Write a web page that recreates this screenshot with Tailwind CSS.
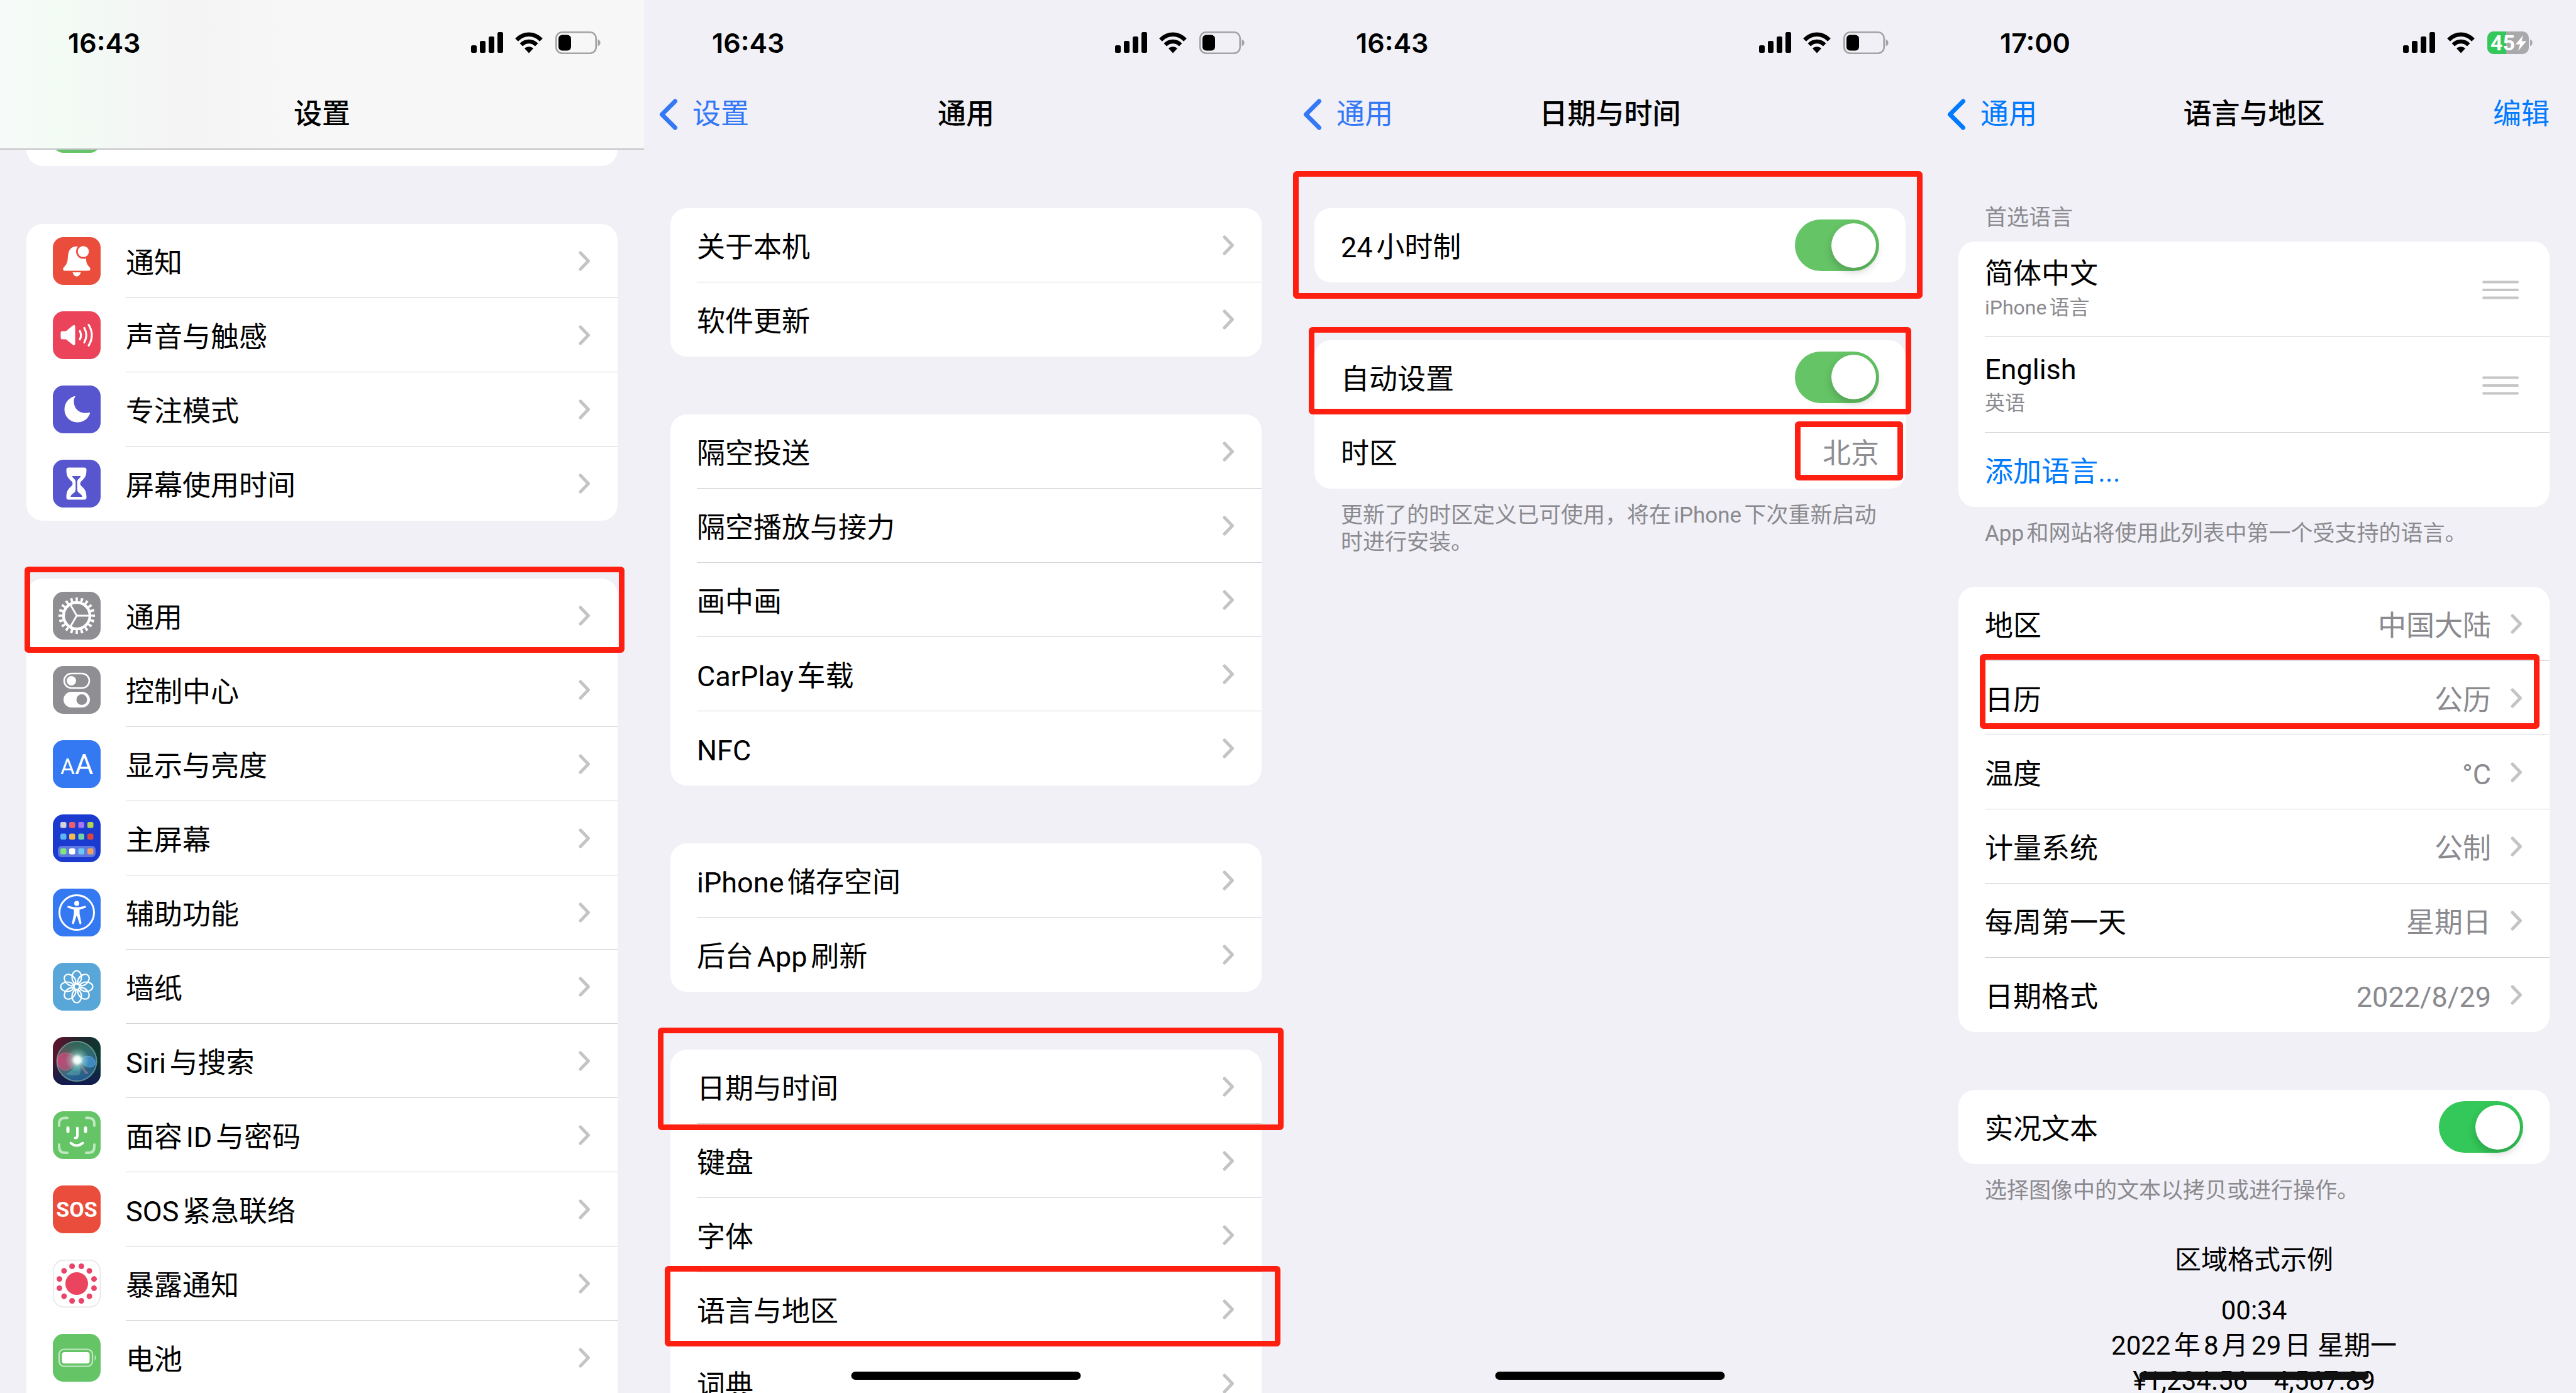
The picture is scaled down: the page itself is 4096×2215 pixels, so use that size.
<!DOCTYPE html>
<html lang="zh-CN">
<head>
<meta charset="utf-8">
<meta name="viewport" content="width=device-width, initial-scale=1">
<title>设置</title>
<script src="https://cdn.jsdelivr.net/npm/@tailwindcss/browser@4"></script>
</head>
<body class="bg-[#f1f0f6] font-['Roboto','Noto_Sans_CJK_SC',sans-serif] text-[45px] leading-[56px] text-black [text-autospace:normal]">

<!-- Shared symbols -->
<svg class="hidden" aria-hidden="true">
  <symbol id="chev" viewBox="0 0 20 34"><path d="M3 4 15.500 17 3 30" fill="none" stroke="#c4c4c7" stroke-width="5" stroke-linecap="round" stroke-linejoin="round"/></symbol>
  <symbol id="back" viewBox="0 0 32 52"><path d="M26.500 5 5.500 26 26.500 47" fill="none" stroke="currentColor" stroke-width="7" stroke-linecap="round" stroke-linejoin="round"/></symbol>
  <symbol id="bars" viewBox="0 0 51 34"><rect x="0" y="21" width="9" height="12" rx="2.500"/><rect x="14" y="14" width="9" height="19" rx="2.500"/><rect x="28" y="7" width="9" height="26" rx="2.500"/><rect x="42" y="0" width="9" height="33" rx="2.500"/></symbol>
  <symbol id="wifi" viewBox="0 0 44 34"><g fill="none" stroke="currentColor" stroke-width="6.500"><path d="M2.500 12.500C13.500 .800 30.500 .800 41.500 12.500"/><path d="M9.800 20.300C16.800 13.200 27.200 13.200 34.200 20.300"/></g><path d="M22 33.500 15 26C19 22.300 25 22.300 29 26Z"/></symbol>
  <symbol id="batt" viewBox="0 0 72 36"><rect x="1.300" y="1.300" width="63.400" height="33.400" rx="9.500" fill="none" stroke="#a3a3a6" stroke-width="2.600"/><rect x="5" y="5.500" width="20" height="25" rx="6"/><path d="M67.500 12.500C73 14.500 73 21.500 67.500 23.500Z" fill="#a3a3a6"/></symbol>
  <symbol id="grip" viewBox="0 0 58 32"><path d="M2 3.500H56M2 16H56M2 28.500H56" stroke="#c6c6c8" stroke-width="4" stroke-linecap="round"/></symbol>
</svg>

<main class="grid grid-cols-4 h-screen overflow-hidden">

<!-- Settings root -->
<section class="relative overflow-hidden">
  <header class="h-[238px] border-b-2 border-[#c3c3c8] bg-[linear-gradient(90deg,#f7faf9_0%,#f2fbf4_10%,#f4f7f5_20%,#f4f4f4_28%,#f7f7f7_45%)]">
    <div class="flex h-[136px] items-center pl-[108px] pr-[69px]">
      <time class="mr-auto font-['Inter'] text-[43px] font-semibold">16:43</time>
      <svg class="h-[34px] w-[51px]"><use href="#bars"/></svg><svg class="ml-[19px] h-[34px] w-[44px]"><use href="#wifi"/></svg><svg class="ml-[20px] h-[36px] w-[72px]"><use href="#batt"/></svg>
    </div>
    <h1 class="pt-[18px] text-center font-medium">设置</h1>
  </header>
  <div class="mx-[42px] flex h-[26px] items-end overflow-hidden rounded-b-[26px] bg-white pb-[21px] pl-[42px]"><span class="size-[76px] shrink-0 rounded-[17px] bg-[#65c466]"></span></div>

  <ul class="mx-[42px] mt-[92px] rounded-[26px] bg-white">
    <li><a href="#" class="flex h-[118px] items-center pl-[42px]">
      <svg class="size-[76px]" viewBox="0 0 76 76"><rect width="76" height="76" rx="17" fill="#eb4d3d"/><path fill="#fff" d="M37 15C28 15 24.500 22 24 31C23.500 41 21.500 44 17.500 48C15 51 16.500 53.500 19 53.500H57C59.500 53.500 60.500 50.500 58.500 48C54.500 44 53 41 52.500 32L45 15.500Q41 15 37 15ZM31.500 56H44.500C43.500 60 41 62.500 38 62.500S32.500 60 31.500 56Z"/><circle cx="48.500" cy="23" r="11.500" fill="#eb4d3d"/><circle cx="48.500" cy="23" r="8.800" fill="#fff"/></svg>
      <span class="ml-[40px] flex h-full flex-1 items-center justify-between border-b border-[#d3d3d6] pr-[42px]"><span class="pt-2">通知</span><svg class="h-[34px] w-[20px]"><use href="#chev"/></svg></span></a></li>
    <li><a href="#" class="flex h-[118px] items-center pl-[42px]">
      <svg class="size-[76px]" viewBox="0 0 76 76"><rect width="76" height="76" rx="17" fill="#eb445a"/><path fill="#fff" d="M15 31.500H21L32 22.500Q35.500 20.500 35.500 24.500V51.500Q35.500 55.500 32 53.500L21 44.500H15Q12.500 44.500 12.500 42V34Q12.500 31.500 15 31.500Z"/><path d="M43 31.500Q46.500 38 43 44.500M50 26.500Q56.500 38 50 49.500M57 21.500Q67 38 57 54.500" fill="none" stroke="#fff" stroke-width="3.200" stroke-linecap="round"/></svg>
      <span class="ml-[40px] flex h-full flex-1 items-center justify-between border-b border-[#d3d3d6] pr-[42px]"><span class="pt-2">声音与触感</span><svg class="h-[34px] w-[20px]"><use href="#chev"/></svg></span></a></li>
    <li><a href="#" class="flex h-[118px] items-center pl-[42px]">
      <svg class="size-[76px]" viewBox="0 0 76 76"><rect width="76" height="76" rx="17" fill="#5856ce"/><path fill="#fff" d="M34.500 17C24.500 20 18.500 28.500 18.500 38C18.500 50 28 58.500 39.500 58.500C48.500 58.500 56 53 59 44.500Q59.500 42.500 57.500 43C43 46.500 32.500 37 33.500 23Q33.700 20 35.500 18Q36 16.500 34.500 17Z"/></svg>
      <span class="ml-[40px] flex h-full flex-1 items-center justify-between border-b border-[#d3d3d6] pr-[42px]"><span class="pt-2">专注模式</span><svg class="h-[34px] w-[20px]"><use href="#chev"/></svg></span></a></li>
    <li><a href="#" class="flex h-[118px] items-center pl-[42px]">
      <svg class="size-[76px]" viewBox="0 0 76 76"><rect width="76" height="76" rx="17" fill="#5856ce"/><path fill="#fff" d="M25 12.500H50Q53.500 12.500 53.500 16C53.500 27 50 30 45 34.500Q42 38 45 41.500C50 46 53.500 49 53.500 60Q53.500 63.500 50 63.500H25Q21.500 63.500 21.500 60C21.500 49 25 46 30 41.500Q33 38 30 34.500C25 30 21.500 27 21.500 16Q21.500 12.500 25 12.500Z"/><path fill="#5856ce" d="M30.500 26H44.500Q43 29 40.500 31Q38.800 32.500 38.800 35V48Q39 51 42 53Q46 55.500 47 59H28Q29 55.500 33 53Q36.200 51 36.200 48V35Q36.200 32.500 34.500 31Q32 29 30.500 26Z"/></svg>
      <span class="ml-[40px] flex h-full flex-1 items-center justify-between pr-[42px]"><span class="pt-2">屏幕使用时间</span><svg class="h-[34px] w-[20px]"><use href="#chev"/></svg></span></a></li>
  </ul>

  <ul class="mx-[42px] mt-[92px] rounded-t-[26px] bg-white pb-8">
    <li class="relative"><a href="#" class="flex h-[118px] items-center pl-[42px]">
      <svg class="size-[76px]" viewBox="0 0 76 76"><rect width="76" height="76" rx="17" fill="#8e8e93"/><g fill="none" stroke="#fff"><circle cx="38" cy="38" r="21" stroke-width="4.500"/><circle cx="38" cy="38" r="26" stroke-width="6" pathLength="40" stroke-dasharray="0.900 1.100" stroke-dashoffset="0.450"/><path d="M38 38H58M38 38 28 20.700M38 38 28 55.300" stroke-width="2.800"/></g></svg>
      <span class="ml-[40px] flex h-full flex-1 items-center justify-between border-b border-[#d3d3d6] pr-[42px]"><span class="pt-2">通用</span><svg class="h-[34px] w-[20px]"><use href="#chev"/></svg></span></a>
      <span class="pointer-events-none absolute -top-[19px] -right-[11px] bottom-0 -left-[3px] rounded-md border-[9px] border-[#ff1f11]"></span></li>
    <li><a href="#" class="flex h-[118px] items-center pl-[42px]">
      <svg class="size-[76px]" viewBox="0 0 76 76"><rect width="76" height="76" rx="17" fill="#8e8e93"/><rect x="18" y="12" width="40" height="23" rx="11.500" fill="none" stroke="#fff" stroke-width="2.600"/><circle cx="29.500" cy="23.500" r="7.500" fill="#fff"/><rect x="17" y="41" width="42" height="25" rx="12.500" fill="#fff"/><circle cx="46" cy="53.500" r="8.500" fill="#8e8e93"/></svg>
      <span class="ml-[40px] flex h-full flex-1 items-center justify-between border-b border-[#d3d3d6] pr-[42px]"><span class="pt-2">控制中心</span><svg class="h-[34px] w-[20px]"><use href="#chev"/></svg></span></a></li>
    <li><a href="#" class="flex h-[118px] items-center pl-[42px]">
      <svg class="size-[76px]" viewBox="0 0 76 76"><rect width="76" height="76" rx="17" fill="#3478f2"/><text x="12" y="54" fill="#fff" font-size="35">A</text><text x="35" y="54" fill="#fff" font-size="45">A</text></svg>
      <span class="ml-[40px] flex h-full flex-1 items-center justify-between border-b border-[#d3d3d6] pr-[42px]"><span class="pt-2">显示与亮度</span><svg class="h-[34px] w-[20px]"><use href="#chev"/></svg></span></a></li>
    <li><a href="#" class="flex h-[118px] items-center pl-[42px]">
      <svg class="size-[76px]" viewBox="0 0 76 76"><rect width="76" height="76" rx="17" fill="#1b3bd0"/><rect x="8" y="50" width="60" height="18" rx="6" fill="#6079e0"/>
        <rect x="12" y="12" width="9.500" height="9.500" rx="2.500" fill="#d3d3d8"/><rect x="26" y="12" width="9.500" height="9.500" rx="2.500" fill="#ec5f67"/><rect x="40.500" y="12" width="9.500" height="9.500" rx="2.500" fill="#a974f5"/><rect x="55" y="12" width="9.500" height="9.500" rx="2.500" fill="#b5d34f"/>
        <rect x="12" y="30.500" width="9.500" height="9.500" rx="2.500" fill="#5ab5f2"/><rect x="26" y="30.500" width="9.500" height="9.500" rx="2.500" fill="#f3bd4a"/><rect x="40.500" y="30.500" width="9.500" height="9.500" rx="2.500" fill="#6fd3a4"/><rect x="55" y="30.500" width="9.500" height="9.500" rx="2.500" fill="#e0453d"/>
        <rect x="12" y="54" width="9.500" height="9.500" rx="2.500" fill="#81e37e"/><rect x="26" y="54" width="9.500" height="9.500" rx="2.500" fill="#fff"/><rect x="40.500" y="54" width="9.500" height="9.500" rx="2.500" fill="#6ac9f7"/><rect x="55" y="54" width="9.500" height="9.500" rx="2.500" fill="#f1a15f"/></svg>
      <span class="ml-[40px] flex h-full flex-1 items-center justify-between border-b border-[#d3d3d6] pr-[42px]"><span class="pt-2">主屏幕</span><svg class="h-[34px] w-[20px]"><use href="#chev"/></svg></span></a></li>
    <li><a href="#" class="flex h-[118px] items-center pl-[42px]">
      <svg class="size-[76px]" viewBox="0 0 76 76"><rect width="76" height="76" rx="17" fill="#3478f2"/><circle cx="38" cy="38" r="27.500" fill="none" stroke="#fff" stroke-width="3"/><circle cx="38" cy="23.500" r="4" fill="#fff"/><path fill="#fff" d="M24.500 27.500 34 29.500H42L51.500 27.500Q54 28.500 52 30.500L42.500 33.500V40L45.500 54.500Q45 57.500 42.500 56L38.500 43.500H37.500L33.500 56Q31 57.500 30.500 54.500L33.500 40V33.500L24 30.500Q22 28.500 24.500 27.500Z"/></svg>
      <span class="ml-[40px] flex h-full flex-1 items-center justify-between border-b border-[#d3d3d6] pr-[42px]"><span class="pt-2">辅助功能</span><svg class="h-[34px] w-[20px]"><use href="#chev"/></svg></span></a></li>
    <li><a href="#" class="flex h-[118px] items-center pl-[42px]">
      <svg class="size-[76px]" viewBox="0 0 76 76"><rect width="76" height="76" rx="17" fill="#59a6d9"/><g fill="none" stroke="#fff" stroke-width="2.200"><ellipse id="petal" cx="38" cy="23" rx="7.500" ry="10.500"/><use href="#petal" transform="rotate(45 38 38)"/><use href="#petal" transform="rotate(90 38 38)"/><use href="#petal" transform="rotate(135 38 38)"/><use href="#petal" transform="rotate(180 38 38)"/><use href="#petal" transform="rotate(225 38 38)"/><use href="#petal" transform="rotate(270 38 38)"/><use href="#petal" transform="rotate(315 38 38)"/><circle cx="38" cy="38" r="4.500"/></g></svg>
      <span class="ml-[40px] flex h-full flex-1 items-center justify-between border-b border-[#d3d3d6] pr-[42px]"><span class="pt-2">墙纸</span><svg class="h-[34px] w-[20px]"><use href="#chev"/></svg></span></a></li>
    <li><a href="#" class="flex h-[118px] items-center pl-[42px]">
      <svg class="size-[76px]" viewBox="0 0 76 76"><defs>
        <linearGradient id="siriBg" x1="0" y1="0" x2="1" y2=".3"><stop offset="0" stop-color="#6b0f2e"/><stop offset=".5" stop-color="#22262c"/><stop offset="1" stop-color="#0c3a33"/></linearGradient>
        <linearGradient id="siriLow" x1="0" y1="0" x2="0" y2="1"><stop offset=".45" stop-color="#101a4a" stop-opacity="0"/><stop offset="1" stop-color="#121a50"/></linearGradient>
        <linearGradient id="siriOrb" x1="0" y1=".3" x2="1" y2=".7"><stop offset="0" stop-color="#b0395f"/><stop offset=".45" stop-color="#4f7f7c"/><stop offset="1" stop-color="#20578f"/></linearGradient>
        <linearGradient id="siriFade" x1="0" y1="0" x2="0" y2="1"><stop offset="0" stop-color="#24604f" stop-opacity=".9"/><stop offset=".5" stop-color="#1f6b55" stop-opacity="0"/><stop offset="1" stop-color="#1f55a0" stop-opacity=".9"/></linearGradient>
        <radialGradient id="siriGlow"><stop offset="0" stop-color="#fff"/><stop offset=".28" stop-color="#effffa" stop-opacity=".95"/><stop offset=".55" stop-color="#b5e8da" stop-opacity=".4"/><stop offset="1" stop-color="#9fe3d2" stop-opacity="0"/></radialGradient></defs>
        <rect width="76" height="76" rx="17" fill="url(#siriBg)"/><rect width="76" height="76" rx="17" fill="url(#siriLow)"/><circle cx="38" cy="38.500" r="31.500" fill="url(#siriOrb)"/><circle cx="38" cy="38.500" r="31.500" fill="url(#siriFade)" stroke="#7fae9f" stroke-opacity=".7" stroke-width="2"/><path d="M7 38Q9 25 22 25Q31 26 39 37Q31 52 20 53Q9 52 7 38Z" fill="#e0457f" fill-opacity=".55" stroke="#f08aae" stroke-opacity=".5"/><path d="M41 37Q51 28 60 31Q69 36 67 44Q62 50 54 47Q46 43 41 37Z" fill="#4aa3e8" fill-opacity=".6" stroke="#8cc8f5" stroke-opacity=".5"/><path d="M40 39 57 58 52 59Z" fill="#d87ab5" fill-opacity=".5"/><path d="M38 40Q32 54 20 59Q30 62 42 60Q48 50 38 40Z" fill="#6fc6d8" fill-opacity=".35"/><circle cx="39" cy="36.500" r="19" fill="url(#siriGlow)"/></svg>
      <span class="ml-[40px] flex h-full flex-1 items-center justify-between border-b border-[#d3d3d6] pr-[42px]"><span class="pt-2">Siri与搜索</span><svg class="h-[34px] w-[20px]"><use href="#chev"/></svg></span></a></li>
    <li><a href="#" class="flex h-[118px] items-center pl-[42px]">
      <svg class="size-[76px]" viewBox="0 0 76 76"><rect width="76" height="76" rx="17" fill="#65c466"/><path d="M10 23V20Q10 10.500 19.500 10.500H23M53 10.500H56.500Q66 10.500 66 20V23M66 53V56.500Q66 66 56.500 66H53M23 66H19.500Q10 66 10 56.500V53" fill="none" stroke="#bfe7c0" stroke-width="4" stroke-linecap="round"/><path d="M24 26.500V32M52 26.500V32" stroke="#fff" stroke-width="5" stroke-linecap="round"/><path d="M39 26.500V39Q39 42.500 35.500 42.500M28.500 50.500Q38 58.500 47.500 50.500" fill="none" stroke="#fff" stroke-width="4" stroke-linecap="round"/></svg>
      <span class="ml-[40px] flex h-full flex-1 items-center justify-between border-b border-[#d3d3d6] pr-[42px]"><span class="pt-2">面容ID与密码</span><svg class="h-[34px] w-[20px]"><use href="#chev"/></svg></span></a></li>
    <li><a href="#" class="flex h-[118px] items-center pl-[42px]">
      <svg class="size-[76px]" viewBox="0 0 76 76"><rect width="76" height="76" rx="17" fill="#eb4d3d"/><text x="38" y="50" text-anchor="middle" fill="#fff" font-size="34" font-weight="700">SOS</text></svg>
      <span class="ml-[40px] flex h-full flex-1 items-center justify-between border-b border-[#d3d3d6] pr-[42px]"><span class="pt-2">SOS紧急联络</span><svg class="h-[34px] w-[20px]"><use href="#chev"/></svg></span></a></li>
    <li><a href="#" class="flex h-[118px] items-center pl-[42px]">
      <svg class="size-[76px]" viewBox="0 0 76 76"><rect x=".700" y=".700" width="74.600" height="74.600" rx="17" fill="#fff" stroke="#e3e3e6" stroke-width="1.400"/><g fill="#e9446a"><circle cx="38" cy="38" r="18" fill="#eb445f"/><g id="pair"><circle cx="45.400" cy="10.500" r="4.500"/><circle cx="30.600" cy="10.500" r="4.500"/></g><use href="#pair" transform="rotate(60 38 38)"/><use href="#pair" transform="rotate(120 38 38)"/><use href="#pair" transform="rotate(180 38 38)"/><use href="#pair" transform="rotate(240 38 38)"/><use href="#pair" transform="rotate(300 38 38)"/></g></svg>
      <span class="ml-[40px] flex h-full flex-1 items-center justify-between border-b border-[#d3d3d6] pr-[42px]"><span class="pt-2">暴露通知</span><svg class="h-[34px] w-[20px]"><use href="#chev"/></svg></span></a></li>
    <li><a href="#" class="flex h-[118px] items-center pl-[42px]">
      <svg class="size-[76px]" viewBox="0 0 76 76"><rect width="76" height="76" rx="17" fill="#65c466"/><rect x="10" y="24.500" width="53" height="27" rx="8" fill="none" stroke="#c4e9c5" stroke-width="2.200"/><rect x="14.500" y="29" width="44" height="18" rx="4" fill="#fff"/><path d="M66.500 33Q70.500 38 66.500 43Z" fill="#c4e9c5"/></svg>
      <span class="ml-[40px] flex h-full flex-1 items-center justify-between pr-[42px]"><span class="pt-2">电池</span><svg class="h-[34px] w-[20px]"><use href="#chev"/></svg></span></a></li>
  </ul>
</section>

<!-- General -->
<section class="relative overflow-hidden">
  <header class="h-[238px]">
    <div class="flex h-[136px] items-center pl-[108px] pr-[69px]">
      <time class="mr-auto font-['Inter'] text-[43px] font-semibold">16:43</time>
      <svg class="h-[34px] w-[51px]"><use href="#bars"/></svg><svg class="ml-[19px] h-[34px] w-[44px]"><use href="#wifi"/></svg><svg class="ml-[20px] h-[36px] w-[72px]"><use href="#batt"/></svg>
    </div>
    <div class="grid grid-cols-[1fr_auto_1fr] items-center px-[42px] pt-[18px]">
      <a href="#" class="-ml-[19px] flex items-center gap-[22px] text-[#3478f6]"><svg class="h-[52px] w-[32px]"><use href="#back"/></svg>设置</a>
      <h1 class="font-medium">通用</h1>
    </div>
  </header>
  <ul class="mx-[42px] mt-[93px] rounded-[26px] bg-white pl-[42px]">
    <li><a href="#" class="flex h-[118px] items-center justify-between border-b border-[#d3d3d6] pr-[42px]"><span class="pt-2">关于本机</span><svg class="h-[34px] w-[20px]"><use href="#chev"/></svg></a></li>
    <li><a href="#" class="flex h-[118px] items-center justify-between pr-[42px]"><span class="pt-2">软件更新</span><svg class="h-[34px] w-[20px]"><use href="#chev"/></svg></a></li>
  </ul>
  <ul class="mx-[42px] mt-[92px] rounded-[26px] bg-white pl-[42px]">
    <li><a href="#" class="flex h-[118px] items-center justify-between border-b border-[#d3d3d6] pr-[42px]"><span class="pt-2">隔空投送</span><svg class="h-[34px] w-[20px]"><use href="#chev"/></svg></a></li>
    <li><a href="#" class="flex h-[118px] items-center justify-between border-b border-[#d3d3d6] pr-[42px]"><span class="pt-2">隔空播放与接力</span><svg class="h-[34px] w-[20px]"><use href="#chev"/></svg></a></li>
    <li><a href="#" class="flex h-[118px] items-center justify-between border-b border-[#d3d3d6] pr-[42px]"><span class="pt-2">画中画</span><svg class="h-[34px] w-[20px]"><use href="#chev"/></svg></a></li>
    <li><a href="#" class="flex h-[118px] items-center justify-between border-b border-[#d3d3d6] pr-[42px]"><span class="pt-2">CarPlay车载</span><svg class="h-[34px] w-[20px]"><use href="#chev"/></svg></a></li>
    <li><a href="#" class="flex h-[118px] items-center justify-between pr-[42px]"><span class="pt-2">NFC</span><svg class="h-[34px] w-[20px]"><use href="#chev"/></svg></a></li>
  </ul>
  <ul class="mx-[42px] mt-[92px] rounded-[26px] bg-white pl-[42px]">
    <li><a href="#" class="flex h-[118px] items-center justify-between border-b border-[#d3d3d6] pr-[42px]"><span class="pt-2">iPhone储存空间</span><svg class="h-[34px] w-[20px]"><use href="#chev"/></svg></a></li>
    <li><a href="#" class="flex h-[118px] items-center justify-between pr-[42px]"><span class="pt-2">后台App刷新</span><svg class="h-[34px] w-[20px]"><use href="#chev"/></svg></a></li>
  </ul>
  <ul class="mx-[42px] mt-[92px] rounded-[26px] bg-white">
    <li class="relative pl-[42px]"><a href="#" class="flex h-[118px] items-center justify-between border-b border-[#d3d3d6] pr-[42px]"><span class="pt-2">日期与时间</span><svg class="h-[34px] w-[20px]"><use href="#chev"/></svg></a>
      <span class="pointer-events-none absolute -top-[35px] -right-[35px] -bottom-[10px] -left-[20px] rounded-md border-[9px] border-[#ff1f11]"></span></li>
    <li class="pl-[42px]"><a href="#" class="flex h-[118px] items-center justify-between border-b border-[#d3d3d6] pr-[42px]"><span class="pt-2">键盘</span><svg class="h-[34px] w-[20px]"><use href="#chev"/></svg></a></li>
    <li class="pl-[42px]"><a href="#" class="flex h-[118px] items-center justify-between border-b border-[#d3d3d6] pr-[42px]"><span class="pt-2">字体</span><svg class="h-[34px] w-[20px]"><use href="#chev"/></svg></a></li>
    <li class="relative pl-[42px]"><a href="#" class="flex h-[118px] items-center justify-between border-b border-[#d3d3d6] pr-[42px]"><span class="pt-2">语言与地区</span><svg class="h-[34px] w-[20px]"><use href="#chev"/></svg></a>
      <span class="pointer-events-none absolute -top-[10px] -right-[30px] bottom-0 -left-[9px] rounded-md border-[9px] border-[#ff1f11]"></span></li>
    <li class="pl-[42px]"><a href="#" class="flex h-[118px] items-center justify-between pr-[42px]"><span class="pt-2">词典</span><svg class="h-[34px] w-[20px]"><use href="#chev"/></svg></a></li>
  </ul>
  <div class="absolute bottom-[21px] left-1/2 h-[13px] w-[365px] -translate-x-1/2 rounded-full bg-black"></div>
</section>

<!-- Date & time -->
<section class="relative overflow-hidden">
  <header class="h-[238px]">
    <div class="flex h-[136px] items-center pl-[108px] pr-[69px]">
      <time class="mr-auto font-['Inter'] text-[43px] font-semibold">16:43</time>
      <svg class="h-[34px] w-[51px]"><use href="#bars"/></svg><svg class="ml-[19px] h-[34px] w-[44px]"><use href="#wifi"/></svg><svg class="ml-[20px] h-[36px] w-[72px]"><use href="#batt"/></svg>
    </div>
    <div class="grid grid-cols-[1fr_auto_1fr] items-center px-[42px] pt-[18px]">
      <a href="#" class="-ml-[19px] flex items-center gap-[22px] text-[#3478f6]"><svg class="h-[52px] w-[32px]"><use href="#back"/></svg>通用</a>
      <h1 class="font-medium">日期与时间</h1>
    </div>
  </header>
  <div class="relative mx-[42px] mt-[93px] flex h-[118px] items-center justify-between rounded-[26px] bg-white px-[42px]">
    <label for="h24" class="pt-2">24小时制</label>
    <input id="h24" type="checkbox" role="switch" checked class="flex h-[82px] w-[134px] appearance-none items-center justify-end rounded-full bg-[#65c466] pr-[5px] before:size-[71px] before:rounded-full before:bg-white before:shadow-[0_6px_14px_rgba(0,0,0,0.2)] before:content-['']">
    <span class="pointer-events-none absolute -top-[59px] -right-[27px] -bottom-[26px] -left-[34px] rounded-md border-[9px] border-[#ff1f11]"></span>
  </div>
  <div class="mx-[42px] mt-[92px] rounded-[26px] bg-white">
    <div class="relative pl-[42px]">
      <div class="flex h-[118px] items-center justify-between border-b border-[#d3d3d6] pr-[42px]"><label for="auto" class="pt-2">自动设置</label>
      <input id="auto" type="checkbox" role="switch" checked class="flex h-[82px] w-[134px] appearance-none items-center justify-end rounded-full bg-[#65c466] pr-[5px] before:size-[71px] before:rounded-full before:bg-white before:shadow-[0_6px_14px_rgba(0,0,0,0.2)] before:content-['']"></div>
      <span class="pointer-events-none absolute -top-[21px] -right-[9px] bottom-0 -left-[9px] rounded-md border-[9px] border-[#ff1f11]"></span>
    </div>
    <div class="relative flex h-[118px] items-center justify-between px-[42px]"><span class="pt-2">时区</span><span class="pt-2 text-[#8e8e92]">北京</span>
      <span class="pointer-events-none absolute top-[11px] right-1 bottom-[13px] w-[172px] rounded-md border-[9px] border-[#ff1f11]"></span>
    </div>
  </div>
  <p class="px-[84px] pt-[21px] text-[35px] leading-[43px] text-[#8a8a8f]">更新了的时区定义已可使用，将在iPhone下次重新启动时进行安装。</p>
  <div class="absolute bottom-[21px] left-1/2 h-[13px] w-[365px] -translate-x-1/2 rounded-full bg-black"></div>
</section>

<!-- Language & region -->
<section class="relative overflow-hidden">
  <header class="h-[238px]">
    <div class="flex h-[136px] items-center pl-[108px] pr-[69px]">
      <time class="mr-auto font-['Inter'] text-[43px] font-semibold">17:00</time>
      <svg class="h-[34px] w-[51px]"><use href="#bars"/></svg><svg class="ml-[19px] h-[34px] w-[44px]"><use href="#wifi"/></svg>
      <svg class="ml-[20px] h-[36px] w-[72px]" viewBox="0 0 72 36"><defs><clipPath id="bc"><rect width="66" height="36" rx="10"/></clipPath></defs><g clip-path="url(#bc)"><rect width="66" height="36" fill="#a9a9ac"/><rect width="30" height="36" fill="#34c759"/></g><path d="M68 12.500C73 14.500 73 21.500 68 23.500Z" fill="#a9a9ac"/><text x="5" y="30" font-size="34" font-weight="700" fill="#fff">45</text><path d="M57 6 45 20.500H52L49 31 62 15.500H54.500Z" fill="#fff"/></svg>
    </div>
    <div class="grid grid-cols-[1fr_auto_1fr] items-center px-[42px] pt-[18px]">
      <a href="#" class="-ml-[19px] flex items-center gap-[22px] text-[#007aff]"><svg class="h-[52px] w-[32px]"><use href="#back"/></svg>通用</a>
      <h1 class="font-medium">语言与地区</h1>
      <button class="justify-self-end text-[#007aff]">编辑</button>
    </div>
  </header>
  <h2 class="px-[84px] pt-[87px] text-[35px] leading-[43px] text-[#8a8a8f]">首选语言</h2>
  <ul class="mx-[42px] mt-[16px] rounded-[26px] bg-white pl-[42px]">
    <li class="flex h-[152px] items-center justify-between border-b border-[#d3d3d6] pt-[2px] pr-[49px]"><div>简体中文<p class="text-[32px] leading-[50px] text-[#8a8a8f]">iPhone语言</p></div><svg class="h-[32px] w-[58px]"><use href="#grip"/></svg></li>
    <li class="flex h-[152px] items-center justify-between border-b border-[#d3d3d6] pt-[2px] pr-[49px]"><div>English<p class="text-[32px] leading-[50px] text-[#8a8a8f]">英语</p></div><svg class="h-[32px] w-[58px]"><use href="#grip"/></svg></li>
    <li class="flex h-[118px] items-center"><button class="pt-2 text-[#007aff] [text-autospace:no-autospace]">添加语言...</button></li>
  </ul>
  <p class="px-[84px] pt-[21px] text-[35px] leading-[43px] text-[#8a8a8f]">App和网站将使用此列表中第一个受支持的语言。</p>
  <ul class="mx-[42px] mt-[63px] rounded-[26px] bg-white">
    <li class="pl-[42px]"><a href="#" class="flex h-[118px] items-center border-b border-[#d3d3d6] pr-[42px]"><span class="mr-auto pt-2">地区</span><span class="mr-[31px] pt-2 text-[#8a8a8f]">中国大陆</span><svg class="h-[34px] w-[20px]"><use href="#chev"/></svg></a></li>
    <li class="relative pl-[42px]"><a href="#" class="flex h-[118px] items-center border-b border-[#d3d3d6] pr-[42px]"><span class="mr-auto pt-2">日历</span><span class="mr-[31px] pt-2 text-[#8a8a8f]">公历</span><svg class="h-[34px] w-[20px]"><use href="#chev"/></svg></a>
      <span class="pointer-events-none absolute -top-[11px] right-4 bottom-[10px] left-[34px] rounded-md border-[9px] border-[#ff1f11]"></span></li>
    <li class="pl-[42px]"><a href="#" class="flex h-[118px] items-center border-b border-[#d3d3d6] pr-[42px]"><span class="mr-auto pt-2">温度</span><span class="mr-[31px] pt-2 text-[#8a8a8f]">°C</span><svg class="h-[34px] w-[20px]"><use href="#chev"/></svg></a></li>
    <li class="pl-[42px]"><a href="#" class="flex h-[118px] items-center border-b border-[#d3d3d6] pr-[42px]"><span class="mr-auto pt-2">计量系统</span><span class="mr-[31px] pt-2 text-[#8a8a8f]">公制</span><svg class="h-[34px] w-[20px]"><use href="#chev"/></svg></a></li>
    <li class="pl-[42px]"><a href="#" class="flex h-[118px] items-center border-b border-[#d3d3d6] pr-[42px]"><span class="mr-auto pt-2">每周第一天</span><span class="mr-[31px] pt-2 text-[#8a8a8f]">星期日</span><svg class="h-[34px] w-[20px]"><use href="#chev"/></svg></a></li>
    <li class="pl-[42px]"><a href="#" class="flex h-[118px] items-center pr-[42px]"><span class="mr-auto pt-2">日期格式</span><span class="mr-[31px] pt-2 text-[#8a8a8f]">2022/8/29</span><svg class="h-[34px] w-[20px]"><use href="#chev"/></svg></a></li>
  </ul>
  <div class="mx-[42px] mt-[92px] flex h-[118px] items-center justify-between rounded-[26px] bg-white px-[42px]">
    <label for="live" class="pt-2">实况文本</label>
    <input id="live" type="checkbox" role="switch" checked class="flex h-[82px] w-[134px] appearance-none items-center justify-end rounded-full bg-[#34c759] pr-[5px] before:size-[71px] before:rounded-full before:bg-white before:shadow-[0_6px_14px_rgba(0,0,0,0.2)] before:content-['']">
  </div>
  <p class="px-[84px] pt-[21px] text-[35px] leading-[43px] text-[#8a8a8f]">选择图像中的文本以拷贝或进行操作。</p>
  <div class="pt-[61px] text-center text-[42px]">
    <h2>区域格式示例</h2>
    <p class="mt-6">00:34</p>
    <p>2022年8月29日 星期一</p>
    <p class="whitespace-pre">¥1,234.56    4,567.89</p>
  </div>
  <div class="absolute bottom-[21px] left-1/2 h-[13px] w-[365px] -translate-x-1/2 rounded-full bg-[#111]"></div>
</section>
</main>
</body>
</html>
